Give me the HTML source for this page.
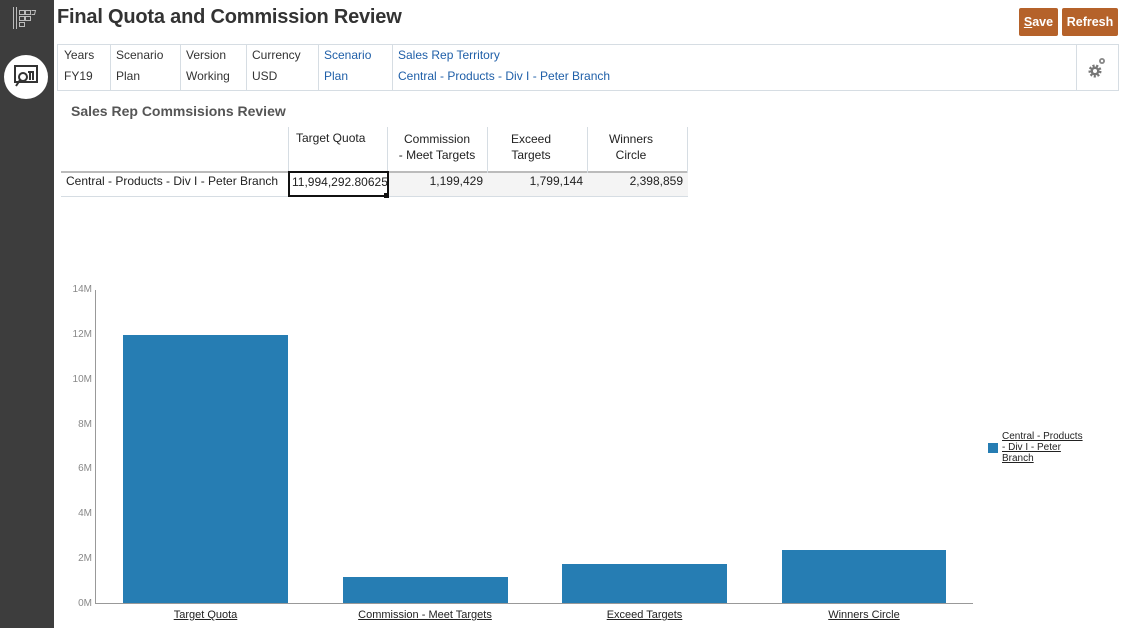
<!DOCTYPE html>
<html><head><meta charset="utf-8"><style>
body{margin:0;width:1122px;height:628px;overflow:hidden;background:#fff;font-family:"Liberation Sans",Arial,sans-serif;position:relative}
.abs{position:absolute}
.side{left:0;top:0;width:54px;height:628px;background:#3d3d3d}
h1{position:absolute;left:57px;top:6px;margin:0;font-size:20px;font-weight:bold;color:#333;letter-spacing:-0.2px}
.btn{position:absolute;top:8px;height:28px;background:#b5622a;color:#fff;font-weight:bold;font-size:12.5px;line-height:28px;text-align:center;border-radius:2px}
.pov{left:57px;top:44px;width:1062px;height:47px;border:1px solid #d6dde3;box-sizing:border-box}
.pc{position:absolute;top:0;height:45px;border-right:1px solid #d6dde3;font-size:12px;color:#333}
.pc div{position:absolute;left:6px;white-space:nowrap}
.blue{color:#1f5fa8}
.t{font-size:12px;color:#222}
.yl{position:absolute;left:60px;width:32px;text-align:right;font-size:10px;color:#888}
.xl{position:absolute;top:609px;font-size:11px;color:#222;text-decoration:underline;text-align:center}
.bar{position:absolute;background:#267db3}
</style></head><body>
<div class="abs side"></div>
<svg class="abs" style="left:12px;top:6px" width="26" height="24" viewBox="0 0 26 24" fill="none" stroke="#bbb" stroke-width="1"><path d="M1.5 1v22M4.5 1v22"/><rect x="7.5" y="4.5" width="5" height="4"/><rect x="13.5" y="4.5" width="5" height="4"/><rect x="7.5" y="10.5" width="5" height="4"/><rect x="13.5" y="10.5" width="5" height="4"/><rect x="7.5" y="16.5" width="5" height="4"/><path d="M19.5 4.5h4l-1 4h-3"/></svg>
<div class="abs" style="left:4px;top:55px;width:44px;height:44px;border-radius:50%;background:#fff"></div>
<svg class="abs" style="left:13px;top:64px" width="26" height="26" viewBox="0 0 26 26" fill="none" stroke="#333" stroke-width="2"><rect x="2" y="2" width="22" height="16"/><circle cx="10" cy="13" r="4"/><path d="M7 16l-4 6"/><path d="M17 9v7M20 7v9M15 8h4"/></svg>
<h1>Final Quota and Commission Review</h1>
<div class="btn" style="left:1019px;width:39px"><u>S</u>ave</div>
<div class="btn" style="left:1062px;width:56px">Refresh</div>
<div class="abs pov">
<div class="pc" style="left:0;width:52px"><div style="top:3px">Years</div><div style="top:24px">FY19</div></div>
<div class="pc" style="left:52px;width:70px"><div style="top:3px">Scenario</div><div style="top:24px">Plan</div></div>
<div class="pc" style="left:122px;width:66px"><div style="top:3px">Version</div><div style="top:24px">Working</div></div>
<div class="pc" style="left:188px;width:72px"><div style="top:3px">Currency</div><div style="top:24px">USD</div></div>
<div class="pc blue" style="left:260px;width:74px"><div style="top:3px">Scenario</div><div style="top:24px">Plan</div></div>
<div class="pc blue" style="left:334px;width:684px"><div style="top:3px">Sales Rep Territory</div><div style="top:24px">Central - Products - Div I - Peter Branch</div></div>
<svg class="abs" style="left:1028px;top:10px" width="22" height="26" viewBox="0 0 22 26"><circle cx="9" cy="16" r="5" fill="none" stroke="#777" stroke-width="3" stroke-dasharray="2 1.5"/><circle cx="9" cy="16" r="4.5" fill="#777"/><circle cx="9" cy="16" r="2" fill="#fff"/><circle cx="16" cy="6" r="3" fill="#888"/><circle cx="16" cy="6" r="1.2" fill="#fff"/></svg>
</div>
<div class="abs" style="left:71px;top:103px;font-size:14px;font-weight:bold;color:#555">Sales Rep Commsisions Review</div>
<div class="abs" style="left:288px;top:127px;width:400px;height:44px;border-bottom:2px solid #bbb"></div>
<div class="abs" style="left:288px;top:127px;width:1px;height:44px;background:#d6dde3"></div>
<div class="abs" style="left:387px;top:127px;width:1px;height:70px;background:#d6dde3"></div>
<div class="abs" style="left:487px;top:127px;width:1px;height:70px;background:#d6dde3"></div>
<div class="abs" style="left:587px;top:127px;width:1px;height:70px;background:#d6dde3"></div>
<div class="abs" style="left:687px;top:127px;width:1px;height:70px;background:#d6dde3"></div>
<div class="abs" style="left:61px;top:171px;width:227px;height:2px;background:#bbb"></div>
<div class="abs" style="left:61px;top:196px;width:627px;height:1px;background:#d6dde3"></div>
<div class="abs" style="left:388px;top:173px;width:300px;height:23px;background:#f4f4f4"></div>
<div class="abs t" style="left:296px;top:131px">Target Quota</div>
<div class="abs t" style="left:391px;top:131px;line-height:16px;text-align:center;width:92px">Commission<br>- Meet Targets</div>
<div class="abs t" style="left:491px;top:131px;line-height:16px;text-align:center;width:80px">Exceed<br>Targets</div>
<div class="abs t" style="left:591px;top:131px;line-height:16px;text-align:center;width:80px">Winners<br>Circle</div>
<div class="abs t" style="left:66px;top:174px">Central - Products - Div I - Peter Branch</div>
<div class="abs" style="left:288px;top:171px;width:101px;height:26px;border:2px solid #111;box-sizing:border-box;overflow:hidden"><div class="t" style="padding:2px 0 0 2px;white-space:nowrap">11,994,292.80625</div></div>
<div class="abs" style="left:384px;top:193px;width:5px;height:5px;background:#111"></div>
<div class="abs t" style="left:388px;top:174px;width:95px;text-align:right">1,199,429</div>
<div class="abs t" style="left:488px;top:174px;width:95px;text-align:right">1,799,144</div>
<div class="abs t" style="left:588px;top:174px;width:95px;text-align:right">2,398,859</div>
<div class="abs" style="left:95px;top:290px;width:1px;height:314px;background:#999"></div>
<div class="abs" style="left:95px;top:603px;width:878px;height:1px;background:#999"></div>
<div class="yl" style="top:284px">14M</div>
<div class="yl" style="top:329px">12M</div>
<div class="yl" style="top:374px">10M</div>
<div class="yl" style="top:419px">8M</div>
<div class="yl" style="top:463px">6M</div>
<div class="yl" style="top:508px">4M</div>
<div class="yl" style="top:553px">2M</div>
<div class="yl" style="top:598px">0M</div>
<div class="bar" style="left:123px;top:335px;width:165px;height:268px"></div>
<div class="bar" style="left:343px;top:577px;width:165px;height:26px"></div>
<div class="bar" style="left:562px;top:564px;width:165px;height:39px"></div>
<div class="bar" style="left:782px;top:550px;width:164px;height:53px"></div>
<div class="xl" style="left:123px;width:165px">Target Quota</div>
<div class="xl" style="left:325px;width:200px">Commission - Meet Targets</div>
<div class="xl" style="left:562px;width:165px">Exceed Targets</div>
<div class="xl" style="left:782px;width:164px">Winners Circle</div>
<div class="abs" style="left:988px;top:443px;width:10px;height:10px;background:#267db3"></div>
<div class="abs" style="left:1002px;top:431px;font-size:10px;line-height:11px;color:#222;text-decoration:underline;white-space:nowrap">Central - Products<br>- Div I - Peter<br>Branch</div>
</body></html>
